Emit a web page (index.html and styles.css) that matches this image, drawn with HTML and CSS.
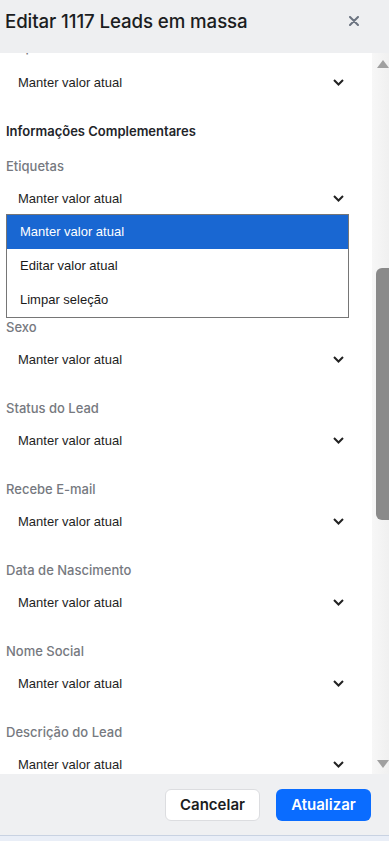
FILE: index.html
```html
<!DOCTYPE html>
<html lang="pt-BR">
<head>
  <meta charset="UTF-8">
  <meta name="viewport" content="width=device-width, initial-scale=1.0">
  <title>Editar Leads em massa</title>
  <link rel="stylesheet" href="styles.css">
</head>
<body>
  <div class="modal">
    <div class="modal-header">
      <h1>Editar 1117 Leads em massa</h1>
      <button class="close-btn" aria-label="Fechar">
        <svg width="10" height="10" viewBox="0 0 10 10"><path d="M1 1L9 9M9 1L1 9" stroke="#6b7380" stroke-width="2" stroke-linecap="round"/></svg>
      </button>
    </div>

    <div class="modal-body">
      <div class="form">
        <div class="field first">
          <label>Empresa</label>
          <div class="select"><span>Manter valor atual</span><svg class="chev" width="11" height="7" viewBox="0 0 11 7"><path d="M1 1L5.5 5.5L10 1" fill="none" stroke="#222" stroke-width="2"/></svg></div>
        </div>

        <h3 class="section-title">Informações Complementares</h3>

        <div class="field open">
          <label>Etiquetas</label>
          <div class="select"><span>Manter valor atual</span><svg class="chev" width="11" height="7" viewBox="0 0 11 7"><path d="M1 1L5.5 5.5L10 1" fill="none" stroke="#222" stroke-width="2"/></svg></div>
          <ul class="menu">
            <li class="selected">Manter valor atual</li>
            <li>Editar valor atual</li>
            <li>Limpar seleção</li>
          </ul>
        </div>

        <div class="field">
          <label>Sexo</label>
          <div class="select"><span>Manter valor atual</span><svg class="chev" width="11" height="7" viewBox="0 0 11 7"><path d="M1 1L5.5 5.5L10 1" fill="none" stroke="#222" stroke-width="2"/></svg></div>
        </div>

        <div class="field">
          <label>Status do Lead</label>
          <div class="select"><span>Manter valor atual</span><svg class="chev" width="11" height="7" viewBox="0 0 11 7"><path d="M1 1L5.5 5.5L10 1" fill="none" stroke="#222" stroke-width="2"/></svg></div>
        </div>

        <div class="field">
          <label>Recebe E-mail</label>
          <div class="select"><span>Manter valor atual</span><svg class="chev" width="11" height="7" viewBox="0 0 11 7"><path d="M1 1L5.5 5.5L10 1" fill="none" stroke="#222" stroke-width="2"/></svg></div>
        </div>

        <div class="field">
          <label>Data de Nascimento</label>
          <div class="select"><span>Manter valor atual</span><svg class="chev" width="11" height="7" viewBox="0 0 11 7"><path d="M1 1L5.5 5.5L10 1" fill="none" stroke="#222" stroke-width="2"/></svg></div>
        </div>

        <div class="field">
          <label>Nome Social</label>
          <div class="select"><span>Manter valor atual</span><svg class="chev" width="11" height="7" viewBox="0 0 11 7"><path d="M1 1L5.5 5.5L10 1" fill="none" stroke="#222" stroke-width="2"/></svg></div>
        </div>

        <div class="field">
          <label>Descrição do Lead</label>
          <div class="select"><span>Manter valor atual</span><svg class="chev" width="11" height="7" viewBox="0 0 11 7"><path d="M1 1L5.5 5.5L10 1" fill="none" stroke="#222" stroke-width="2"/></svg></div>
        </div>
      </div>

      <div class="scrollbar">
        <div class="arrow up"></div>
        <div class="track"><div class="thumb"></div></div>
        <div class="arrow down"></div>
      </div>
    </div>

    <div class="modal-footer">
      <button class="btn btn-cancel">Cancelar</button>
      <button class="btn btn-primary">Atualizar</button>
    </div>
    <div class="page-edge"></div>
  </div>
</body>
</html>
```

FILE: styles.css
```css
body {
  margin: 0;
  padding: 0;
  font-family: 'Inter', 'Liberation Sans', sans-serif;
  background-color: #fff;
}

.modal {
  width: 389px;
  height: 841px;
  display: flex;
  flex-direction: column;
  overflow: hidden;
}

.modal-header {
  height: 53px;
  flex-shrink: 0;
  display: flex;
  align-items: center;
  justify-content: space-between;
  padding: 0 30px 0 5px;
  background-color: #eeeff1;
  position: relative;
  z-index: 1;
}

.modal-header h1 {
  margin: 0 0 11px;
  font-size: 18.7px;
  font-weight: 500;
  color: #1b1d21;
  letter-spacing: -0.1px;
}

.close-btn {
  border: none;
  background: none;
  padding: 0;
  margin-bottom: 11px;
  display: flex;
  cursor: pointer;
}

.modal-body {
  flex: 1;
  display: flex;
  min-height: 0;
}

.form {
  flex: 1;
  overflow: hidden;
  padding: 0 23px 0 6px;
}

.field {
  margin-bottom: 19px;
}

.field.first {
  margin-top: -16px;
}

.field.first .select {
  margin-top: 5px;
}

.field label {
  display: block;
  height: 20px;
  line-height: 20px;
  font-size: 13px;
  font-weight: 500;
  color: #767980;
}

.select {
  margin-top: 2px;
  height: 40px;
  display: flex;
  align-items: center;
  justify-content: space-between;
  padding: 0 5px 0 12px;
  font-family: 'Liberation Sans', Arial, sans-serif;
  font-size: 13px;
  color: #1e1e1e;
}

.section-title {
  margin: 0 0 15px;
  height: 20px;
  line-height: 20px;
  font-size: 13px;
  font-weight: 600;
  color: #222429;
}

.field.open {
  margin-bottom: -1px;
}

.menu {
  list-style: none;
  margin: -4px 0 0;
  padding: 0;
  border: 1px solid #767676;
  font-family: 'Liberation Sans', Arial, sans-serif;
  font-size: 13px;
  color: #1a1a1a;
}

.menu li {
  height: 34px;
  line-height: 34px;
  padding-left: 13px;
}

.menu li.selected {
  background-color: #1967d2;
  color: #fff;
}

.scrollbar {
  width: 17px;
  flex-shrink: 0;
  display: flex;
  flex-direction: column;
  background: linear-gradient(to right, #f7f7f7, #f0f0f0);
}

.arrow {
  height: 17px;
  display: flex;
  justify-content: center;
  align-items: center;
  padding-left: 4px;
}

.arrow::before {
  content: '';
  width: 0;
  height: 0;
  border-left: 6.5px solid transparent;
  border-right: 6.5px solid transparent;
}

.arrow.up::before {
  border-bottom: 8px solid #a0a0a0;
  margin-top: 5px;
}

.arrow.down::before {
  border-top: 8px solid #a0a0a0;
  margin-bottom: 4px;
}

.track {
  flex: 1;
  padding: 198px 0 0 4px;
}

.thumb {
  height: 252px;
  background-color: #8a8a8a;
  border-radius: 6px 0 0 6px;
}

.modal-footer {
  height: 61px;
  flex-shrink: 0;
  display: flex;
  justify-content: flex-end;
  align-items: center;
  gap: 16px;
  padding: 0 18px 0 0;
  background-color: #eff0f2;
}

.btn {
  width: 95px;
  height: 32px;
  border-radius: 6px;
  font-family: 'Inter', 'Liberation Sans', sans-serif;
  font-size: 15px;
  font-weight: 600;
  cursor: pointer;
}

.btn-cancel {
  background-color: #fff;
  border: 1px solid #dcdde0;
  color: #1b1d21;
}

.btn-primary {
  background-color: #0a6cff;
  border: none;
  color: #fff;
}

.page-edge {
  height: 5px;
  flex-shrink: 0;
  border-top: 1px solid #c8d2e2;
  background-color: #e9eef7;
}
```
